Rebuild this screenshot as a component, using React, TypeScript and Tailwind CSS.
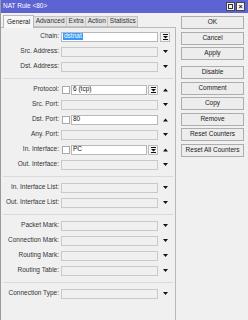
import React from 'react';

const font = { fontFamily: '"Liberation Sans", Arial, sans-serif' };

const DropDown = () => (
  <svg width="5" height="4" viewBox="0 0 5 4">
    <path d="M0 0 H5 L2.5 3 Z" fill="#111" />
  </svg>
);

const UpArrow = () => (
  <svg width="5" height="4" viewBox="0 0 5 4">
    <path d="M0 3.5 H5 L2.5 0.5 Z" fill="#111" />
  </svg>
);

const ListBtn = () => (
  <div className="flex h-[10px] w-[10px] items-center justify-center border border-[#bcbcbc] bg-[#f4f4f4]">
    <svg width="5" height="6" viewBox="0 0 5 6">
      <path d="M0 0.5 H5" stroke="#111" strokeWidth="1" />
      <path d="M0 2 H5 L2.5 4.5 Z" fill="#111" />
      <path d="M0 5.5 H5" stroke="#111" strokeWidth="1" />
    </svg>
  </div>
);

const Check = () => <div className="ml-[1px] h-[8px] w-[8px] shrink-0 border border-[#a8a8a8] bg-white" />;

const GrayBox = () => <div className="h-[10px] w-full border border-[#c9c9c9] bg-[#f0f0f0]" />;

const WhiteBox = ({ children }: { children?: React.ReactNode }) => (
  <div className="flex h-[10px] min-w-0 flex-1 items-center border border-[#b8b8b8] bg-white pl-[1px] text-[6.5px] leading-none text-[#111]">
    {children}
  </div>
);

interface RowProps {
  label: string;
  children?: React.ReactNode;
  icon?: React.ReactNode;
}

const Row = ({ label, children, icon }: RowProps) => (
  <div className="flex h-[15px] items-center">
    <div className="w-[60px] shrink-0 pr-[2px] text-right text-[6.5px] leading-none text-[#333]">{label}</div>
    <div className="flex w-[97px] shrink-0 items-center gap-[1px]">{children ?? <GrayBox />}</div>
    <div className="flex w-[14px] shrink-0 items-center justify-center">{icon ?? <DropDown />}</div>
  </div>
);

const Sep = () => (
  <div className="flex h-[8px] items-center px-[2px]">
    <div className="h-0 w-full border-t border-[#dadada]" />
  </div>
);

const tabs = ['General', 'Advanced', 'Extra', 'Action', 'Statistics'];
const buttons = [
  ['OK', 'Cancel', 'Apply'],
  ['Disable', 'Comment', 'Copy', 'Remove', 'Reset Counters', 'Reset All Counters'],
];

export default function App() {
  return (
    <div className="flex h-[320px] w-[248px] flex-col overflow-hidden border-l border-[#9a9a9a] bg-[#f0f0f0]" style={font}>
      {/* title bar */}
      <div className="flex h-[13px] shrink-0 items-center justify-between bg-[#5d63d2] pl-[2px] pr-[3px]">
        <span className="text-[6.5px] leading-none text-white">NAT Rule &lt;80&gt;</span>
        <div className="flex gap-[1px]">
          <div className="flex h-[9px] w-[9px] items-center justify-center border border-[#444] bg-[#f4f4f4]">
            <div className="h-[5px] w-[5px] border border-[#333]" />
          </div>
          <div className="flex h-[9px] w-[9px] items-center justify-center border border-[#444] bg-[#f4f4f4] text-[7px] font-bold leading-none text-[#111]">
            ×
          </div>
        </div>
      </div>

      <div className="flex flex-1">
        {/* left */}
        <div className="flex w-[175px] shrink-0 flex-col">
          <div className="flex h-[14px] items-end pl-[2px]">
            {tabs.map((t, i) => (
              <div
                key={t}
                className={
                  i === 0
                    ? 'z-10 -mb-[1px] flex h-[13px] items-center border border-b-0 border-[#b8b8b8] bg-[#f7f7f7] px-[3px] text-[6.5px] leading-none text-[#222]'
                    : 'flex h-[11px] items-center border border-l-0 border-[#c4c4c4] bg-[#e4e4e4] px-[1.5px] text-[6.5px] leading-none text-[#333]'
                }
              >
                {t}
              </div>
            ))}
          </div>
          <div className="flex-1 border border-b-0 border-l-0 border-[#b8b8b8] pt-[1px]">
            <Row label="Chain:" icon={<ListBtn />}>
              <WhiteBox>
                <span className="bg-[#3399ff] px-[1px] text-white">dstnat</span>
              </WhiteBox>
            </Row>
            <Row label="Src. Address:" />
            <Row label="Dst. Address:" />
            <Sep />
            <Row label="Protocol:" icon={<UpArrow />}>
              <Check />
              <WhiteBox>6 (tcp)</WhiteBox>
              <ListBtn />
            </Row>
            <Row label="Src. Port:" />
            <Row label="Dst. Port:" icon={<UpArrow />}>
              <Check />
              <WhiteBox>80</WhiteBox>
            </Row>
            <Row label="Any. Port:" />
            <Row label="In. Interface:" icon={<UpArrow />}>
              <Check />
              <WhiteBox>PC</WhiteBox>
              <ListBtn />
            </Row>
            <Row label="Out. Interface:" />
            <Sep />
            <Row label="In. Interface List:" />
            <Row label="Out. Interface List:" />
            <Sep />
            <Row label="Packet Mark:" />
            <Row label="Connection Mark:" />
            <Row label="Routing Mark:" />
            <Row label="Routing Table:" />
            <Sep />
            <Row label="Connection Type:" />
          </div>
        </div>

        {/* right */}
        <div className="flex flex-1 flex-col gap-[6px] pl-[5px] pr-[4px] pt-[3px]">
          {buttons.map((group, gi) => (
            <div key={gi} className="flex flex-col gap-[2.5px]">
              {group.map((b) => (
                <div
                  key={b}
                  className="flex h-[13px] items-center justify-center border border-[#adadad] bg-[#ededed] text-[6.5px] leading-none text-[#222]"
                >
                  {b}
                </div>
              ))}
            </div>
          ))}
        </div>
      </div>
    </div>
  );
}
